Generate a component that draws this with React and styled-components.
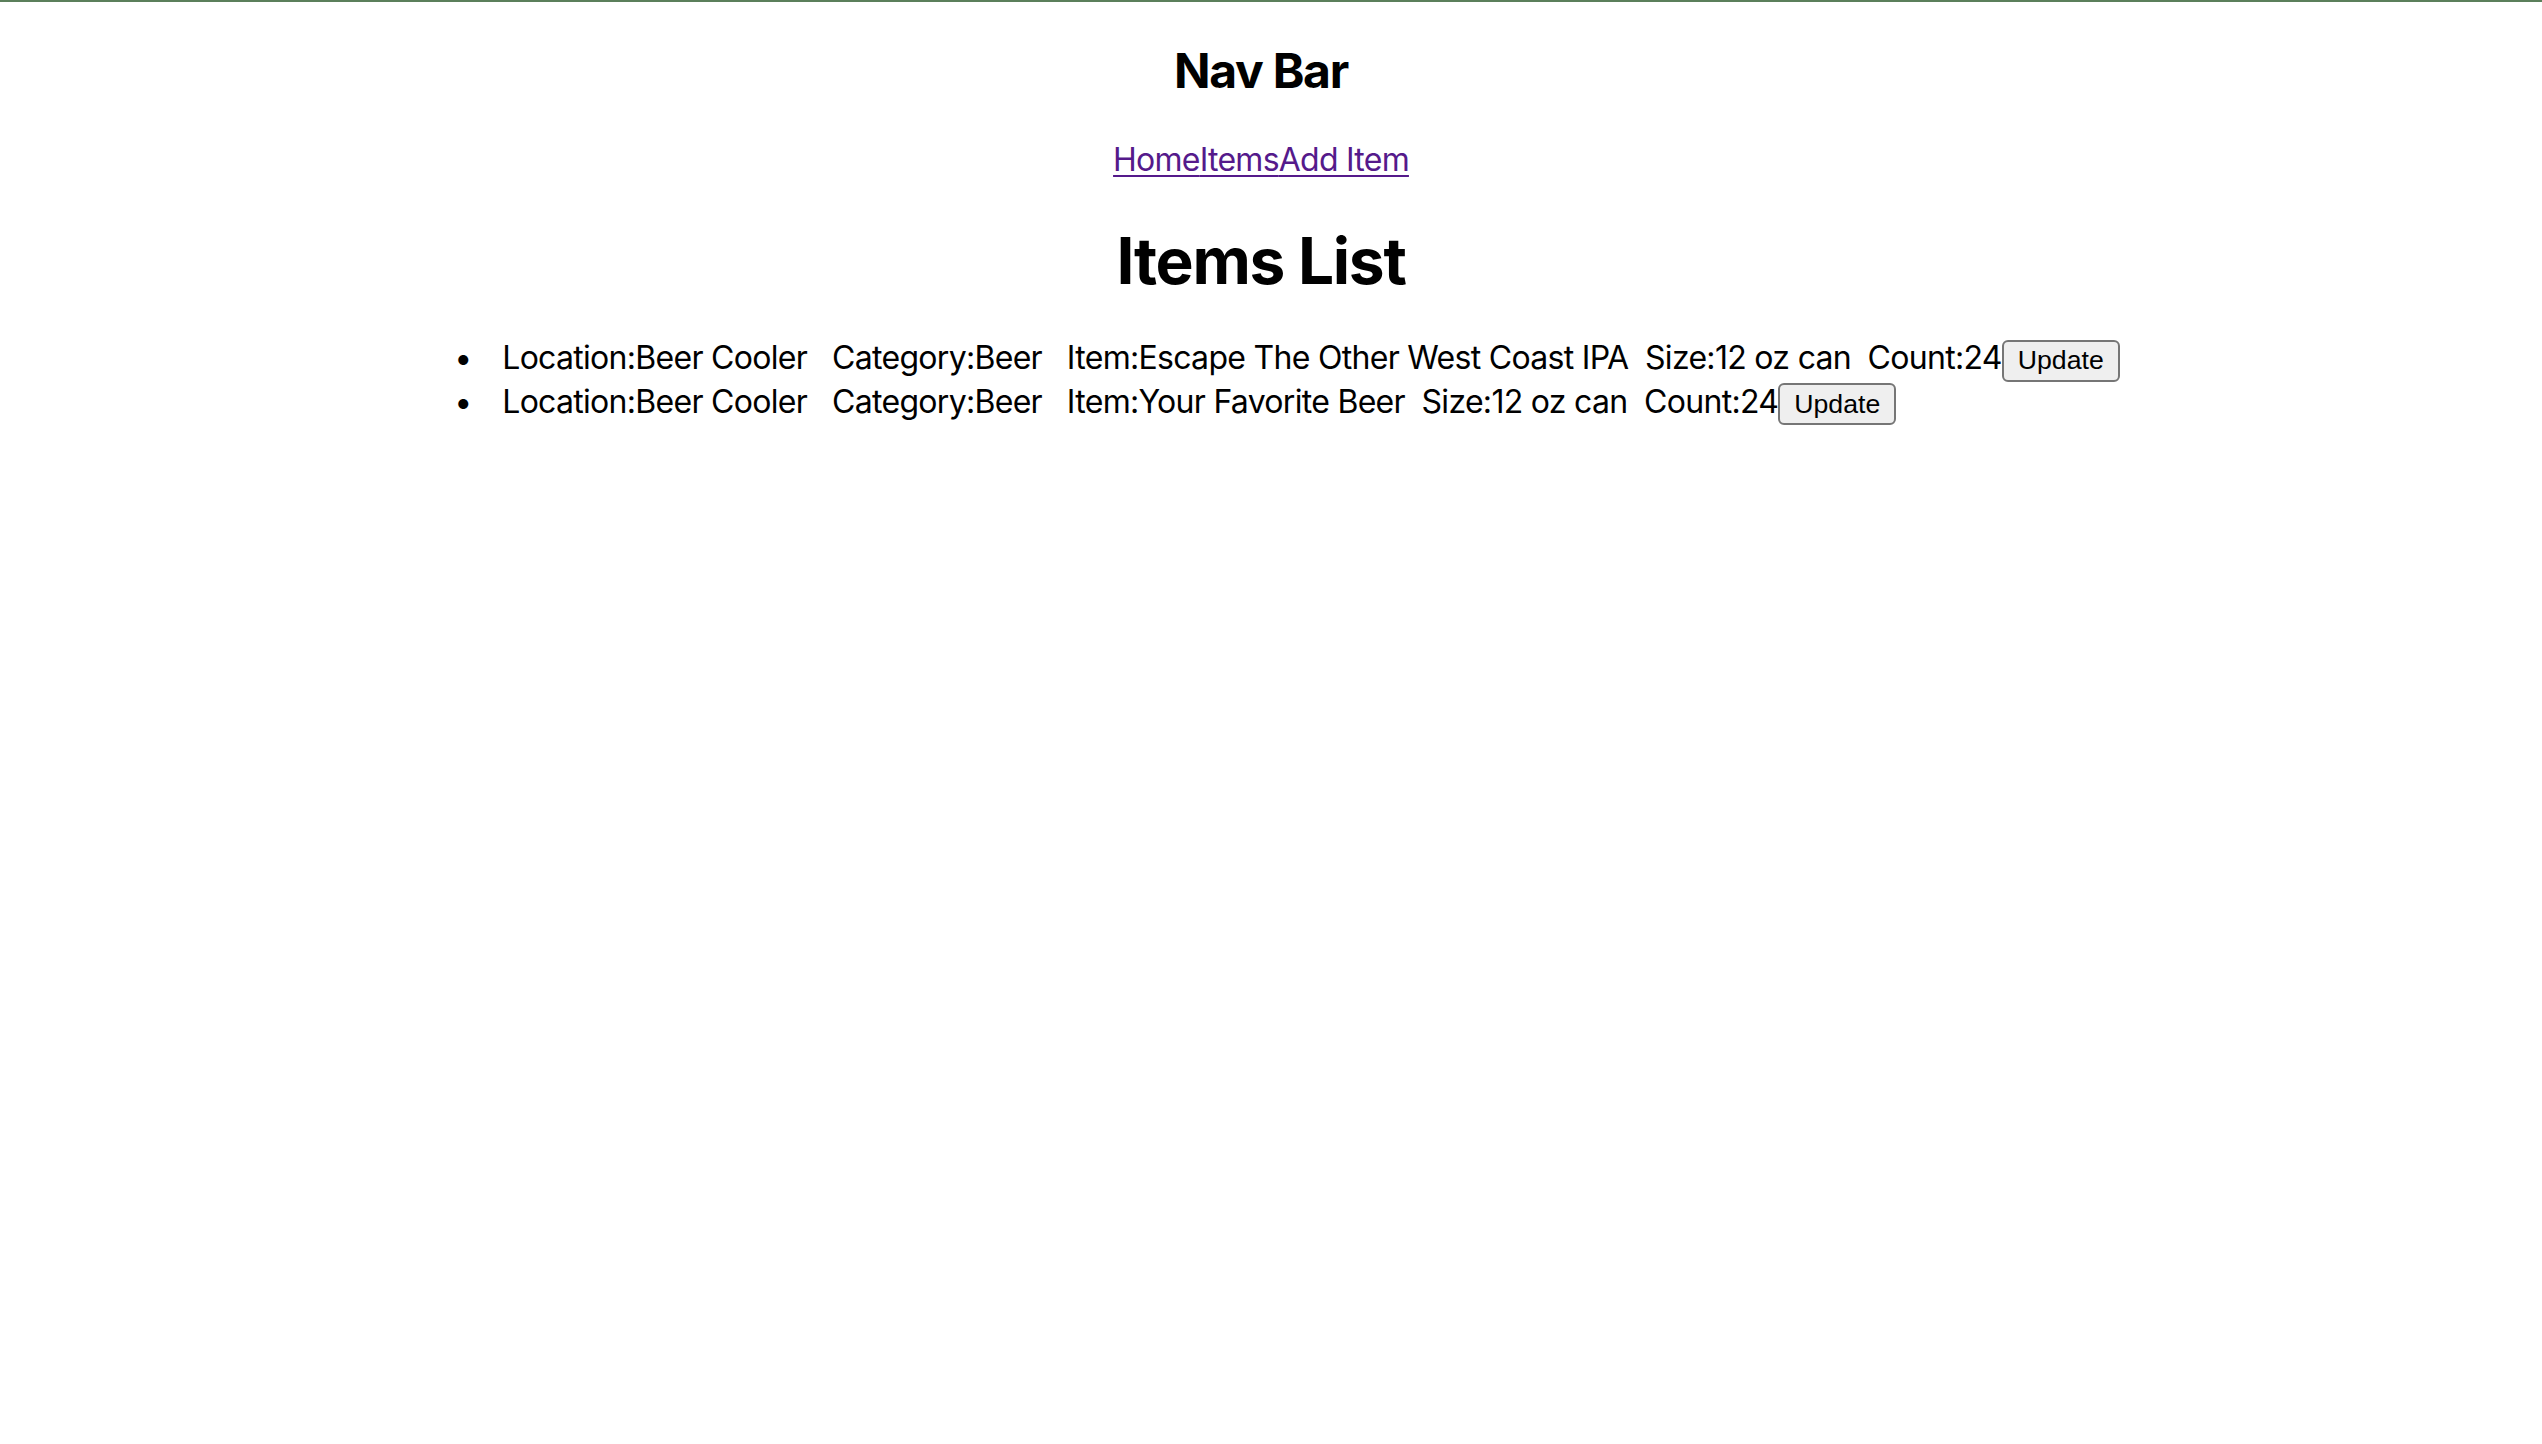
import React from 'react'
import styled, { createGlobalStyle } from 'styled-components'

const GlobalStyle = createGlobalStyle`
  html {
    background: #ffffff;
    box-shadow: inset 0 2px 0 #5b7f5b;
    min-height: 100%;
  }
  body {
    margin: 16px;
    font-family: 'Inter', 'Noto Sans', sans-serif;
    font-size: 32px;
    color: #000000;
  }
`

const Page = styled.div`
  text-align: center;
`

// headings sit a touch left of the list's axis in the original
const Headings = styled.div`
  padding-right: 20px;
`

const NavTitle = styled.h2`
  font-size: 48px;
  font-weight: 700;
  letter-spacing: -1.3px;
  margin: 25px 0 40px;
`

const NavLinks = styled.nav`
  display: block;
  letter-spacing: -0.75px;
`

const NavLink = styled.a`
  color: #551a8b;
  text-decoration: underline;
  text-decoration-thickness: 2px;
  text-underline-offset: 4px;
  cursor: pointer;
`

const Title = styled.h1`
  font-size: 64px;
  font-weight: 700;
  letter-spacing: -1.3px;
  margin: 43px 0 39px;
`

const ItemList = styled.ul`
  width: fit-content;
  margin: 32px auto;
  padding-left: 80px;
  text-align: left;
  list-style: disc outside;
`

const Row = styled.li`
  line-height: normal;
  letter-spacing: -0.7px;

  &::marker {
    content: '\u2022\u2002\u2002';
    font-size: 32px;
  }
`

const UpdateBtn = styled.button`
  font-family: 'Liberation Sans', Arial, sans-serif;
  font-size: 26.67px;
  letter-spacing: 0;
  color: #000000;
  background: #efefef;
  border: 2px solid #767676;
  border-radius: 6px;
  padding: 3.5px 14px;
  cursor: pointer;
`

const items = [
  { location: 'Beer Cooler', category: 'Beer', name: 'Escape The Other West Coast IPA', size: '12 oz can', count: 24 },
  { location: 'Beer Cooler', category: 'Beer', name: 'Your Favorite Beer', size: '12 oz can', count: 24 },
]

export default function App() {
  return (
    <Page>
      <GlobalStyle />
      <Headings>
        <NavTitle>Nav Bar</NavTitle>
        <NavLinks>
          <NavLink>Home</NavLink>
          <NavLink>Items</NavLink>
          <NavLink>Add Item</NavLink>
        </NavLinks>
        <Title>Items List</Title>
      </Headings>
      <ItemList>
        {items.map((it, i) => (
          <Row key={i}>
            Location:{it.location}{'\u00a0\u00a0 '}Category:{it.category}{'\u00a0\u00a0 '}Item:{it.name}{'\u00a0 '}Size:{it.size}{'\u00a0 '}Count:{it.count}
            <UpdateBtn>Update</UpdateBtn>
          </Row>
        ))}
      </ItemList>
    </Page>
  )
}
